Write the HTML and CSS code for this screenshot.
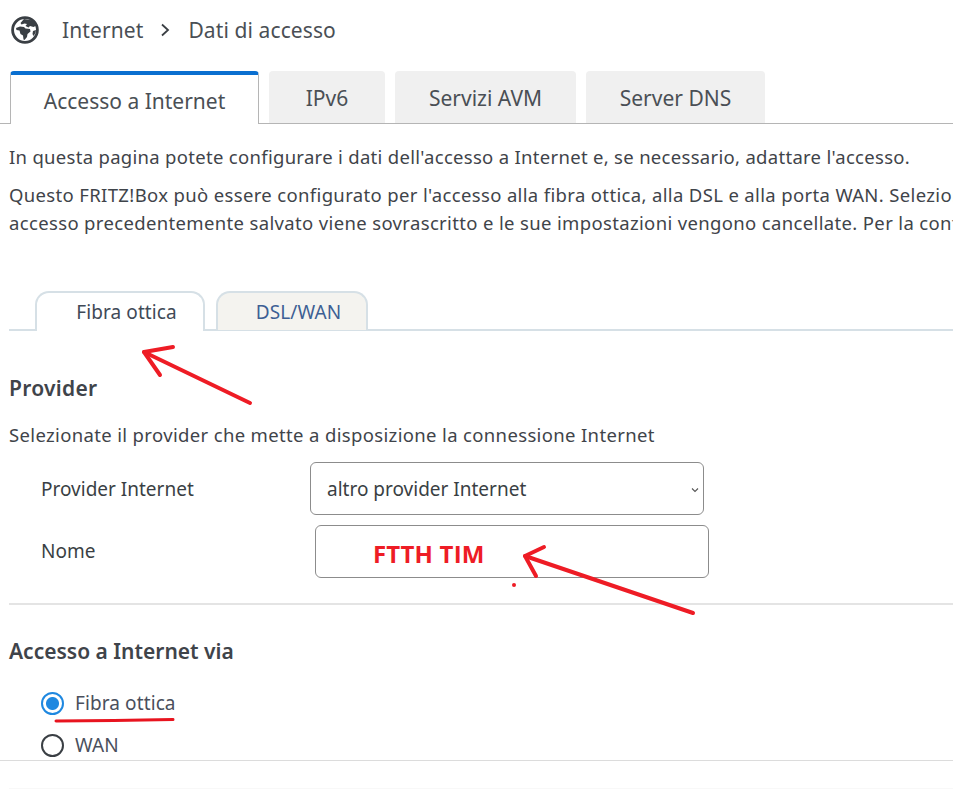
FILE: index.html
```html
<!DOCTYPE html>
<html lang="it">
<head>
  <meta charset="UTF-8" />
  <title>FRITZ!Box - Dati di accesso</title>
  <link rel="stylesheet" href="styles.css">
</head>
<body>
  <div class="page">
    <div class="breadcrumb">
      <svg class="globe" viewBox="0 0 28 28" width="28" height="28">
        <circle cx="14" cy="14" r="12.400" fill="#fff" stroke="#3a3f44" stroke-width="2.800"/>
        <path fill="#3a3f44" d="M13 3l9 1.500 3.500 5-3 1.500-3.500-1-1.500 1.500-3-1.500 1.500-2-2.500-.5-3 1-1-1.500z"/>
        <path fill="#3a3f44" d="M5 12l4-1.500 4 .5 1.500 1.500 4.500.5.5 2.500-3 2.500-.5 3-2.500 3-1-.5-.5-4-2.500-1.500-1-3.500-3-.5z"/>
        <path fill="#3a3f44" d="M22 15l3-1-.5 3-2 3-1-2z"/>
      </svg>
      <span class="crumb">Internet</span>
      <svg class="chevron" viewBox="0 0 10 14" width="10" height="14">
        <path d="M2 1.500L8 7l-6 5.500" fill="none" stroke="#3a3f44" stroke-width="1.800"/>
      </svg>
      <span class="crumb">Dati di accesso</span>
    </div>

    <div class="main-tabs">
      <div class="main-tab active">Accesso a Internet</div>
      <div class="main-tab tab-ipv6">IPv6</div>
      <div class="main-tab tab-avm">Servizi AVM</div>
      <div class="main-tab tab-dns">Server DNS</div>
    </div>

    <div class="content">
      <p class="intro first">In questa pagina potete configurare i dati dell'accesso a Internet e, se necessario, adattare l'accesso.</p>
      <p class="intro second">Questo FRITZ!Box può essere configurato per l'accesso alla fibra ottica, alla DSL e alla porta WAN. Selezionate<br>accesso precedentemente salvato viene sovrascritto e le sue impostazioni vengono cancellate. Per la configurazione</p>

      <div class="sub-tabs">
        <div class="sub-tab active">Fibra ottica</div>
        <div class="sub-tab">DSL/WAN</div>
      </div>

      <h2 class="provider-title">Provider</h2>
      <p class="intro provider-text">Selezionate il provider che mette a disposizione la connessione Internet</p>

      <div class="form-row row-provider">
        <label>Provider Internet</label>
        <div class="field select-field">
          altro provider Internet
          <svg class="caret" viewBox="0 0 8 6" width="8" height="6"><path d="M1 1.500l3 3 3-3" fill="none" stroke="#555" stroke-width="1.100"/></svg>
        </div>
      </div>
      <div class="form-row row-name">
        <label>Nome</label>
        <div class="field name-field">FTTH TIM</div>
      </div>

      <hr class="divider" />

      <h2 class="via-title">Accesso a Internet via</h2>
      <div class="radio-row checked"><span class="radio"></span>Fibra ottica</div>
      <div class="radio-row"><span class="radio"></span>WAN</div>
    </div>

    <div class="footer"></div>

    <!-- annotazioni a mano sopra lo screenshot -->
    <svg class="marks" viewBox="0 0 953 800" width="953" height="800">
      <g fill="none" stroke="#ee1c25" stroke-width="4" stroke-linecap="round" stroke-linejoin="round">
        <path d="M250 403L144 352"/>
        <path d="M173 347L144 352L160 375"/>
        <path d="M693 613L525 556"/>
        <path d="M544 547L525 556L536 576"/>
      </g>
      <path d="M56 721L114 720.500L173 719.500" fill="none" stroke="#e8141f" stroke-width="3" stroke-linecap="round"/>
      <circle cx="514" cy="585" r="2" fill="#ee1c25"/>
    </svg>
  </div>
</body>
</html>
```

FILE: styles.css
```css
* {
  margin: 0;
  padding: 0;
  box-sizing: border-box;
  font-family: 'Noto Sans', 'Open Sans', sans-serif;
}
body {
  background-color: white;
  color: #3a3f44;
  overflow: hidden;
}
.page {
  position: relative;
  width: 953px;
  height: 800px;
  display: flex;
  flex-direction: column;
  overflow: hidden;
}
.breadcrumb {
  display: flex;
  align-items: center;
  height: 60px;
  padding-left: 11px;
  font-size: 21px;
  letter-spacing: 0.1px;
  color: #4a4f55;
}
.globe {
  margin-right: 23px;
}
.chevron {
  margin: 0 18px 0 17px;
}
.main-tabs {
  display: flex;
  gap: 10px;
  height: 53px;
  margin-top: 11px;
  padding-left: 10px;
  border-bottom: 1px solid #b5b5b5;
}
.main-tab {
  display: flex;
  align-items: center;
  justify-content: center;
  width: 116px;
  height: 52px;
  padding-top: 2px;
  font-size: 21px;
  color: #4a4f55;
  background-color: #f0f0f0;
  border-radius: 4px 4px 0 0;
}
.main-tab.active {
  width: 249px;
  height: 53px;
  background-color: white;
  border: 1px solid #b5b5b5;
  border-top: 4px solid #0a6fd0;
  border-bottom: none;
}
.tab-avm {
  width: 181px;
}
.tab-dns {
  width: 179px;
}
.content {
  flex: 1;
  overflow: hidden;
  padding-left: 9px;
}
.intro {
  font-size: 18.500px;
  line-height: 28px;
  letter-spacing: 0.35px;
  white-space: nowrap;
  color: #3f444a;
}
.intro.first {
  margin-top: 19px;
  letter-spacing: 0.3px;
}
.intro.second {
  margin-top: 10px;
}
.sub-tabs {
  display: flex;
  gap: 11px;
  height: 40px;
  margin-top: 54px;
  padding-left: 26px;
  border-bottom: 2px solid #d6e0e6;
}
.sub-tab {
  display: flex;
  align-items: center;
  justify-content: center;
  width: 152px;
  height: 39px;
  padding-left: 13px;
  font-size: 19px;
  letter-spacing: 0.1px;
  color: #3d5f94;
  background-color: #f4f3ef;
  border: 2px solid #d6e0e6;
  border-bottom: none;
  border-radius: 14px 14px 0 0;
}
.sub-tab.active {
  width: 170px;
  height: 40px;
  color: #3f4a57;
  background-color: white;
}
h2 {
  font-size: 21px;
  font-weight: 600;
  line-height: 28px;
  color: #3f444a;
}
.provider-title {
  margin-top: 43px;
  letter-spacing: 0.3px;
}
.provider-text {
  margin-top: 19px;
}
.form-row {
  display: flex;
  align-items: center;
  padding-left: 32px;
  font-size: 19px;
}
.form-row label {
  width: 269px;
}
.field {
  position: relative;
  display: flex;
  align-items: center;
  width: 394px;
  height: 53px;
  padding-left: 16px;
  border: 1px solid #8c8c8c;
  border-radius: 6px;
}
.row-provider {
  margin-top: 13px;
}
.row-name {
  margin-top: 10px;
}
.row-name label {
  padding-bottom: 2px;
}
.name-field {
  margin-left: 5px;
  padding-left: 57px;
  padding-top: 3px;
  font-family: 'Open Sans', sans-serif;
  font-size: 24px;
  font-weight: 700;
  letter-spacing: 0.2px;
  color: #ee1c25;
}
.caret {
  position: absolute;
  right: 4px;
  top: 24px;
}
.divider {
  margin-top: 25px;
  border: none;
  border-top: 2px solid #e4e4e4;
}
.via-title {
  margin-top: 32px;
}
.radio-row {
  display: flex;
  align-items: center;
  gap: 11px;
  height: 42px;
  padding-left: 32px;
  font-size: 19px;
  letter-spacing: 0.1px;
  color: #4a4f5c;
}
.via-title + .radio-row {
  margin-top: 17px;
}
.radio {
  width: 23px;
  height: 23px;
  background-color: white;
  border: 2.500px solid #3a3f44;
  border-radius: 50%;
}
.checked .radio {
  border-color: #1f88e0;
  background: radial-gradient(circle, #1f88e0 0 6px, white 7px);
}
.footer {
  height: 40px;
  padding-top: 27px;
  border-top: 1px solid #dcdcdc;
}
.footer::after {
  content: "";
  display: block;
  margin-left: 9px;
  border-top: 1px solid #f8f8f8;
}
.marks {
  position: absolute;
  left: 0;
  top: 0;
  pointer-events: none;
}
```
